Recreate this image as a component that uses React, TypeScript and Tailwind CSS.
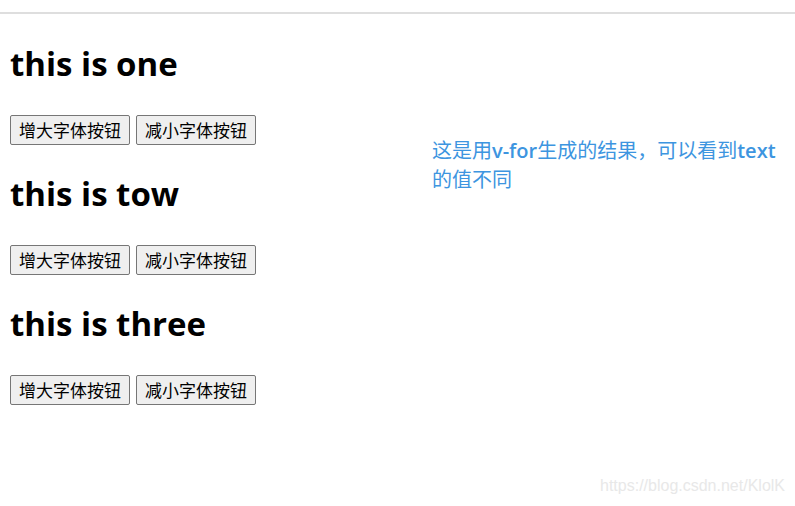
import React from 'react';

const items = ['this is one', 'this is tow', 'this is three'];

const Btn = ({ children }: { children: React.ReactNode }) => (
  <button className="h-[30px] w-[120px] rounded-[2px] border border-[#767676] bg-[#efefef] text-[17px] leading-none text-black">
    {children}
  </button>
);

const App = () => {
  return (
    <div
      className="relative h-[506px] w-[795px] overflow-hidden bg-white"
      style={{ fontFamily: '"Open Sans", "Noto Sans CJK SC", sans-serif' }}
    >
      <div className="mt-[12px] h-[2px] w-full bg-[#dedede]" />
      <div className="flex">
        <div className="w-[432px] pl-[10px] pt-[30px]">
          {items.map((t) => (
            <div key={t}>
              <h1 className="mb-[31px] h-[40px] text-[33px] font-bold leading-[40px] text-black">{t}</h1>
              <div className="mb-[29px] flex h-[30px] gap-[6px]">
                <Btn>{'增大字体按钮'}</Btn>
                <Btn>{'减小字体按钮'}</Btn>
              </div>
            </div>
          ))}
        </div>
        <p className="w-[350px] pt-[122px] text-[20px] leading-[29px] text-[#3d95e0]">
          {'这是用'}
          <span className="font-semibold">{'v-for'}</span>
          {'生成的结果，可以看到'}
          <span className="font-semibold">{'text'}</span>
          {'的值不同'}
        </p>
      </div>
      <span
        className="absolute bottom-[8px] right-[10px] text-[16px] text-[#e8e8e8]"
        style={{ fontFamily: '"Liberation Sans", sans-serif' }}
      >
        {'https://blog.csdn.net/KlolK'}
      </span>
    </div>
  );
};

export default App;
